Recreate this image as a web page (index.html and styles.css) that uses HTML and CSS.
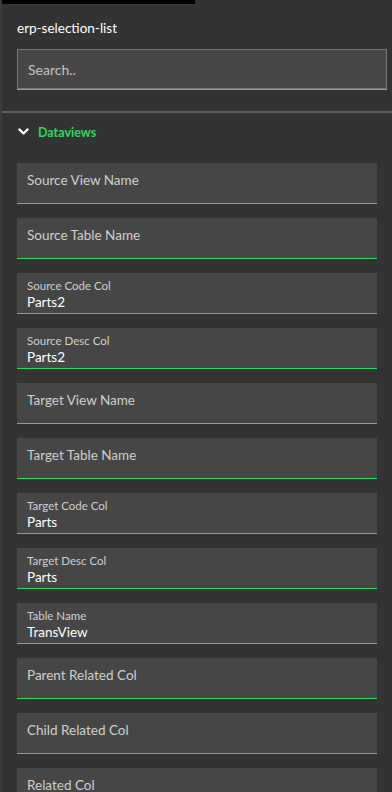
FILE: index.html
```html
<!DOCTYPE html>
<html>
<head>
<meta charset="utf-8">
<link rel="stylesheet" href="styles.css">
</head>
<body>
<div class="topbar"></div>
<div class="panel">
  <header class="head">
    <div class="title">erp-selection-list</div>
    <div class="search"><input class="search-input" type="text" placeholder="Search.."></div>
  </header>
  <div class="divider"></div>
  <section class="group">
    <div class="group-head">
      <svg class="chev" width="11" height="8" viewBox="0 0 11 8"><path d="M1.5 1.5 L5.5 5.5 L9.5 1.5" fill="none" stroke="#ffffff" stroke-width="2.4" stroke-linecap="round" stroke-linejoin="round"/></svg>
      <span class="group-name">Dataviews</span>
    </div>
    <div class="fields">
      <div class="field empty"><span class="ph">Source View Name</span></div>
      <div class="field empty"><span class="ph">Source Table Name</span></div>
      <div class="field"><span class="lbl">Source Code Col</span><span class="val">Parts2</span></div>
      <div class="field"><span class="lbl">Source Desc Col</span><span class="val">Parts2</span></div>
      <div class="field empty"><span class="ph">Target View Name</span></div>
      <div class="field empty"><span class="ph">Target Table Name</span></div>
      <div class="field"><span class="lbl">Target Code Col</span><span class="val">Parts</span></div>
      <div class="field"><span class="lbl">Target Desc Col</span><span class="val">Parts</span></div>
      <div class="field"><span class="lbl">Table Name</span><span class="val">TransView</span></div>
      <div class="field empty"><span class="ph">Parent Related Col</span></div>
      <div class="field empty"><span class="ph">Child Related Col</span></div>
      <div class="field empty"><span class="ph">Related Col</span></div>
    </div>
  </section>
</div>
</body>
</html>
```

FILE: styles.css
```css
html, body {
  margin: 0;
  padding: 0;
  background: #333333;
  height: 792px;
  overflow: hidden;
}
body {
  font-family: Lato, "Liberation Sans", sans-serif;
  color: #ffffff;
  border-left: 2px solid #3b3b3b;
  box-sizing: border-box;
}
.topbar {
  width: 193px;
  height: 4px;
  background: #000000;
  margin-left: -2px;
  padding-left: 2px;
}
.panel {
  display: flex;
  flex-direction: column;
}
.head {
  display: flex;
  flex-direction: column;
  padding: 0 5px 0 15px;
}
.title {
  font-size: 13.5px;
  line-height: 20px;
  margin-top: 14px;
  color: #ffffff;
}
.search {
  margin-top: 11px;
  box-shadow: 0 1px 0 #2fd760;
}
.search-input {
  display: block;
  width: 100%;
  box-sizing: border-box;
  height: 40px;
  border: 1px solid #787878;
  background: #474747;
  color: #ffffff;
  font-family: Lato, "Liberation Sans", sans-serif;
  font-size: 14px;
  padding: 0 10px;
  outline: none;
}
.search-input::placeholder {
  color: #c4c4c4;
}
.divider {
  height: 2px;
  background: #5c5c5c;
  margin-top: 22px;
}
.group {
  display: flex;
  flex-direction: column;
  padding: 0 15px 0 15px;
}
.group-head {
  display: flex;
  align-items: center;
  gap: 9px;
  height: 20px;
  margin-top: 9px;
  padding-left: 1px;
}
.chev {
  display: block;
}
.group-name {
  color: #2fd760;
  font-size: 12.5px;
  font-weight: 700;
}
.fields {
  display: flex;
  flex-direction: column;
  gap: 14px;
  margin-top: 21px;
}
.field {
  height: 40px;
  flex: none;
  background: #464646;
  border-bottom: 1px solid #2fd760;
  display: flex;
  flex-direction: column;
  padding: 0 10px;
}
.ph {
  font-size: 13.5px;
  color: #cfcfcf;
  line-height: 18px;
  margin-top: 8px;
}
.lbl {
  font-size: 11.5px;
  color: #cfcfcf;
  line-height: 14px;
  margin-top: 6px;
}
.val {
  font-size: 13.5px;
  color: #ffffff;
  line-height: 18px;
  margin-top: 0px;
}
```
